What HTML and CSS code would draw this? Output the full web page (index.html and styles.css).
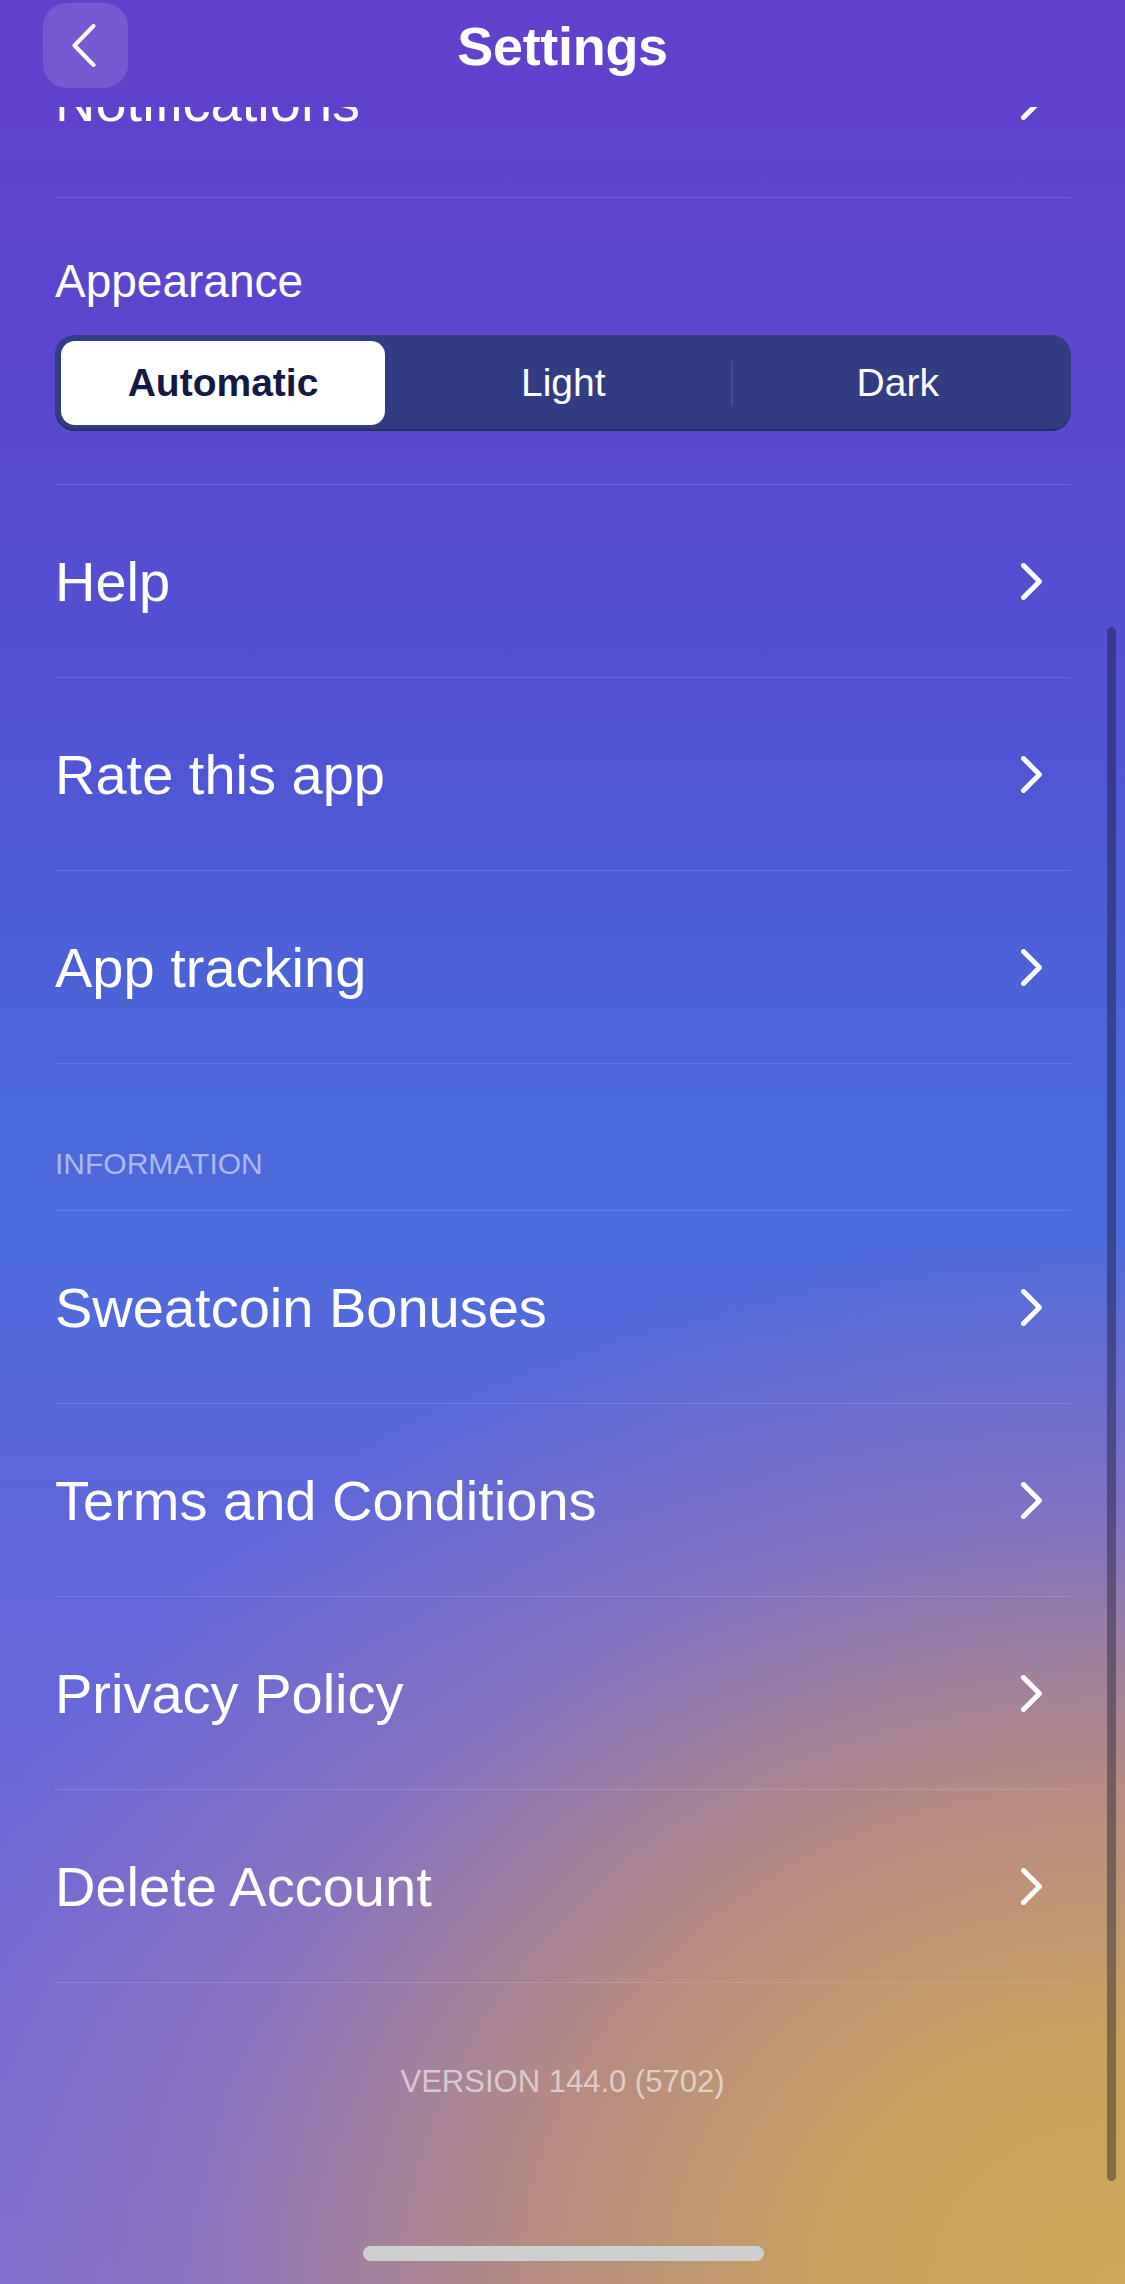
FILE: index.html
```html
<!DOCTYPE html>
<html lang="en">
<head>
<meta charset="utf-8">
<title>Settings</title>
<link rel="stylesheet" href="styles.css">
</head>
<body>
<div class="screen">
  <header class="nav">
    <button class="back" aria-label="Back">
      <svg width="24" height="43" viewBox="0 0 24 43"><path d="M21.5 2 L2.5 21.5 L21.5 41" fill="none" stroke="#fff" stroke-width="4" stroke-linecap="round" stroke-linejoin="round"/></svg>
    </button>
    <h1 class="title">Settings</h1>
    <div></div>
  </header>
  <main class="scroll">
    <div class="list">
      <div class="row first"><span>Notifications</span><svg class="chev" width="21" height="37" viewBox="0 0 21 37"><path d="M2.5 2.5 L18.5 18.5 L2.5 34.5" fill="none" stroke="#fff" stroke-width="5" stroke-linecap="round" stroke-linejoin="round"/></svg></div>
      <section class="appearance">
        <div class="label">Appearance</div>
        <div class="segmented">
          <div class="seg selected">Automatic</div>
          <div class="seg">Light</div>
          <div class="seg divided">Dark</div>
        </div>
      </section>
      <div class="row"><span>Help</span><svg class="chev" width="21" height="37" viewBox="0 0 21 37"><path d="M2.5 2.5 L18.5 18.5 L2.5 34.5" fill="none" stroke="#fff" stroke-width="5" stroke-linecap="round" stroke-linejoin="round"/></svg></div>
      <div class="row"><span>Rate this app</span><svg class="chev" width="21" height="37" viewBox="0 0 21 37"><path d="M2.5 2.5 L18.5 18.5 L2.5 34.5" fill="none" stroke="#fff" stroke-width="5" stroke-linecap="round" stroke-linejoin="round"/></svg></div>
      <div class="row"><span>App tracking</span><svg class="chev" width="21" height="37" viewBox="0 0 21 37"><path d="M2.5 2.5 L18.5 18.5 L2.5 34.5" fill="none" stroke="#fff" stroke-width="5" stroke-linecap="round" stroke-linejoin="round"/></svg></div>
      <div class="section-head">INFORMATION</div>
      <div class="row"><span>Sweatcoin Bonuses</span><svg class="chev" width="21" height="37" viewBox="0 0 21 37"><path d="M2.5 2.5 L18.5 18.5 L2.5 34.5" fill="none" stroke="#fff" stroke-width="5" stroke-linecap="round" stroke-linejoin="round"/></svg></div>
      <div class="row"><span>Terms and Conditions</span><svg class="chev" width="21" height="37" viewBox="0 0 21 37"><path d="M2.5 2.5 L18.5 18.5 L2.5 34.5" fill="none" stroke="#fff" stroke-width="5" stroke-linecap="round" stroke-linejoin="round"/></svg></div>
      <div class="row"><span>Privacy Policy</span><svg class="chev" width="21" height="37" viewBox="0 0 21 37"><path d="M2.5 2.5 L18.5 18.5 L2.5 34.5" fill="none" stroke="#fff" stroke-width="5" stroke-linecap="round" stroke-linejoin="round"/></svg></div>
      <div class="row"><span>Delete Account</span><svg class="chev" width="21" height="37" viewBox="0 0 21 37"><path d="M2.5 2.5 L18.5 18.5 L2.5 34.5" fill="none" stroke="#fff" stroke-width="5" stroke-linecap="round" stroke-linejoin="round"/></svg></div>
      <div class="version">VERSION 144.0 (5702)</div>
    </div>
  </main>
  <div class="scrollbar"></div>
  <div class="home-indicator"></div>
</div>
</body>
</html>
```
FILE: styles.css
```css
html, body {
  margin: 0;
  padding: 0;
}
body {
  font-family: "Liberation Sans", Arial, sans-serif;
  color: #fff;
}
.screen {
  position: relative;
  width: 1125px;
  height: 2284px;
  overflow: hidden;
  display: flex;
  flex-direction: column;
  background:
    radial-gradient(ellipse 112% 46% at 100% 100%, #cca85a 0%, #c9a35e 22%, rgba(188, 142, 122, 0.9) 48%, rgba(160, 125, 170, 0.5) 74%, rgba(120, 105, 215, 0) 100%),
    linear-gradient(180deg, #6340cd 0%, #5a48d0 18%, #5055d5 33%, #4a66d8 46%, #4c6bdc 54%, #5e66dc 66%, #7068d8 82%, #7a6ad6 100%);
}
.nav {
  height: 107px;
  flex: none;
  display: grid;
  grid-template-columns: 1fr auto 1fr;
  align-items: start;
}
.back {
  margin: 3px 0 0 43px;
  width: 85px;
  height: 85px;
  border: none;
  border-radius: 24px;
  background: rgba(255, 255, 255, 0.13);
  display: flex;
  align-items: center;
  justify-content: center;
  padding: 0 4px 0 0;
  cursor: pointer;
}
.title {
  margin: 0;
  font-size: 54px;
  font-weight: 700;
  line-height: 92px;
  letter-spacing: -0.3px;
}
.scroll {
  flex: 1;
  overflow: hidden;
}
.list {
  margin-top: -102px;
}
.row {
  height: 192px;
  margin: 0 54px 0 55px;
  border-bottom: 1px solid rgba(255, 255, 255, 0.13);
  display: flex;
  align-items: center;
  justify-content: space-between;
  font-size: 56px;
}
.chev {
  margin-right: 29px;
  flex: none;
}
.appearance {
  margin: 0 54px 0 55px;
  padding: 57px 0 53px;
  border-bottom: 1px solid rgba(255, 255, 255, 0.13);
}
.label {
  font-size: 46px;
  line-height: 52px;
}
.segmented {
  margin-top: 28px;
  height: 96px;
  box-sizing: border-box;
  padding: 6px;
  border-radius: 20px;
  background: #323c82;
  box-shadow: inset 0 -2px 0 rgba(20, 20, 60, 0.35);
  display: flex;
}
.seg {
  flex: 1;
  display: flex;
  align-items: center;
  justify-content: center;
  font-size: 39px;
  font-weight: 500;
  color: #fff;
  position: relative;
}
.seg.selected {
  flex: none;
  width: 324px;
  margin-right: 11px;
  background: #fff;
  border-radius: 14px;
  color: #151a45;
  font-weight: 700;
}
.seg.divided::before {
  content: "";
  position: absolute;
  left: 0;
  top: 20px;
  bottom: 20px;
  width: 2px;
  background: rgba(255, 255, 255, 0.1);
}
.section-head {
  margin: 0 54px 0 55px;
  padding: 82px 0 28px;
  border-bottom: 1px solid rgba(255, 255, 255, 0.13);
  font-size: 30px;
  line-height: 36px;
  color: rgba(255, 255, 255, 0.55);
}
.version {
  margin-top: 81px;
  text-align: center;
  font-size: 31px;
  line-height: 36px;
  color: rgba(255, 255, 255, 0.58);
}
.scrollbar {
  position: absolute;
  left: 1107px;
  top: 627px;
  width: 9px;
  height: 1554px;
  border-radius: 5px;
  background: rgba(20, 20, 40, 0.4);
}
.home-indicator {
  position: absolute;
  left: 363px;
  top: 2246px;
  width: 401px;
  height: 15px;
  border-radius: 8px;
  background: #cfcfcf;
}
```
